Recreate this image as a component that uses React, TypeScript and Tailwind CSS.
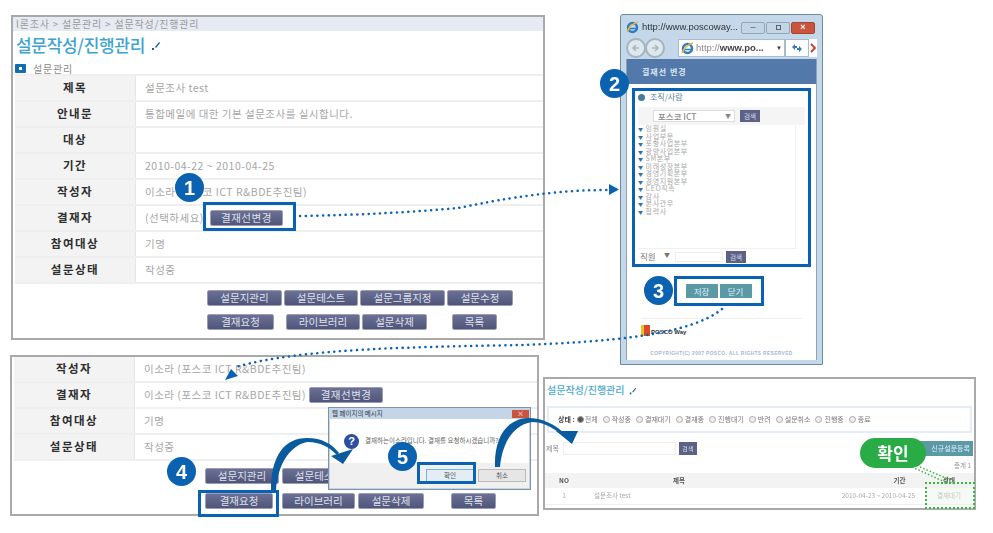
const kr = "font-['Noto_Sans_CJK_KR','Noto_Sans',sans-serif]";

function Btn({ w, children }: { w: string; children: string }) {
  return (
    <div className={`${w} h-[16px] flex items-center justify-center rounded-[2px] text-[10.5px] leading-none text-[#dfe0ea] border border-[#9a9eb5] bg-linear-to-b from-[#6b7094] to-[#50557a]`}>
      {children}
    </div>
  );
}

function Row({ label, h = "h-[26px]", children }: { label: string; h?: string; children?: React.ReactNode }) {
  return (
    <div className={`flex ${h} border-b-2 border-[#efefef]`}>
      <div className="w-[121px] shrink-0 flex items-center justify-center bg-[#f3f3f3] border-r border-[#e6e6e6] text-[11.5px] font-bold tracking-[1.5px] text-[#2e2e2e]">{label}</div>
      <div className="flex-1 flex items-center pl-[9px] text-[10.5px] tracking-[0.5px] text-[#a6a6a6] whitespace-nowrap">{children}</div>
    </div>
  );
}

function Num({ n, className }: { n: number; className: string }) {
  return (
    <div className={`absolute w-[29px] h-[29px] rounded-full bg-[#0b62b0] flex items-center justify-center text-white text-[20px] font-bold font-['Liberation_Sans',sans-serif] ${className}`}>{n}</div>
  );
}

function BlueBox({ className }: { className: string }) {
  return <div className={`absolute border-[3px] border-[#0a62b4] ${className}`} />;
}

function Panel1() {
  return (
    <div className="absolute left-[11px] top-[15px] w-[534px] h-[325px] border-2 border-[#a9a9a9] bg-white">
      <div className="h-[14px] bg-[#e6ebf3] flex items-center pb-[2px] text-[10px] tracking-[0.8px] text-[#9a9a9a] pl-[3px] whitespace-nowrap">l론조사 &gt; 설문관리 &gt; 설문작성/진행관리</div>
      <div className="h-[26px] flex items-center gap-[6px] pl-[3px]">
        <span className="text-[17px] font-medium text-[#3da4cf] leading-none tracking-[-0.3px]">설문작성/진행관리</span>
        <svg width="10" height="10" viewBox="0 0 10 10" className="mt-[4px]"><path d="M1 9 L3 9 L3 7 L1 7Z M4 6 L8 1 L9 2 L5 7Z" fill="#1f5f8f" /></svg>
      </div>
      <div className="h-[17px] flex items-center gap-[7px] pl-[2px] pt-[5px]">
        <div className="w-[11px] h-[9px] bg-[#0f6fb0] flex items-center justify-center rounded-[1px]"><div className="w-[3px] h-[3px] bg-white" /></div>
        <span className="text-[10px] tracking-[0.8px] text-[#8a8a8a]">설문관리</span>
      </div>
      <div className="ml-[2px] border-t-2 border-[#efefef]">
        <Row label="제목">설문조사 test</Row>
        <Row label="안내문">통합메일에 대한 기본 설문조사를 실시합니다.</Row>
        <Row label="대상" />
        <Row label="기간">2010-04-22 ~ 2010-04-25</Row>
        <Row label="작성자">이소라 (포스코 ICT R&amp;BDE추진팀)</Row>
        <Row label="결재자"><span>(선택하세요)</span><span className="ml-[6px]"><Btn w="w-[73px]">결재선변경</Btn></span></Row>
        <Row label="참여대상">기명</Row>
        <Row label="설문상태">작성중</Row>
      </div>
      <div className="mt-[6px] ml-[194px] flex flex-col gap-[8px]">
        <div className="flex gap-[2px]">
          <Btn w="w-[75px]">설문지관리</Btn><Btn w="w-[74px]">설문테스트</Btn><Btn w="w-[85px]">설문그룹지정</Btn><Btn w="w-[66px]">설문수정</Btn>
        </div>
        <div className="flex gap-[2px]">
          <Btn w="w-[67px]">결재요청</Btn><span className="w-[8px]" /><Btn w="w-[74px]">라이브러리</Btn><Btn w="w-[65px]">설문삭제</Btn><span className="w-[21px]" /><Btn w="w-[45px]">목록</Btn>
        </div>
      </div>
    </div>
  );
}

function IeIcon() {
  return (
    <svg width="13" height="13" viewBox="0 0 13 13" className="shrink-0">
      <circle cx="6.500" cy="6.500" r="4.500" fill="none" stroke="#2f7cc4" strokeWidth="2.500" />
      <path d="M2 7.500 H11" stroke="#2f7cc4" strokeWidth="1.500" />
      <path d="M1 11 C 2 7, 7 2, 12 1" stroke="#e8b93c" strokeWidth="1.500" fill="none" />
    </svg>
  );
}

function NavCircle({ d }: { d: string }) {
  return (
    <span className="w-[20px] h-[20px] -mr-[1px] rounded-full bg-[#dfe8ef] border-2 border-[#a5b3bf] flex items-center justify-center">
      <svg width="10" height="10" viewBox="0 0 10 10"><path d={d} stroke="#aab6c0" strokeWidth="1.500" fill="none" /></svg>
    </span>
  );
}

function Popup() {
  const items = ["임원실", "사업부문", "포항사업본부", "광양사업본부", "SM본부", "미래성장본부", "경영기획본부", "경영지원본부", "CEO직속", "감사", "본사관무", "협력사"];
  return (
    <div className="absolute left-[620px] top-[14px] w-[203px] h-[351px] border border-[#6f8ba3] rounded-t-[3px] bg-[#c5d8ea] flex flex-col px-[5px] pb-[4px]">
      <div className="h-[22px] flex items-center gap-[3px] font-['Liberation_Sans',sans-serif] shrink-0 pt-[3px]">
        <IeIcon />
        <span className="w-[96px] text-[9.5px] font-medium text-[#333] whitespace-nowrap">http://www.poscoway...</span>
        <div className="flex gap-[1px]">
          <span className="w-[24px] h-[12px] rounded-[2px] bg-[#c4d6e6] border border-[#8ea6bb] text-[9px] leading-[9px] text-center text-[#455]">–</span>
          <span className="w-[24px] h-[12px] rounded-[2px] bg-[#c4d6e6] border border-[#8ea6bb] flex items-center justify-center"><span className="w-[5px] h-[5px] border border-[#566]" /></span>
          <span className="w-[24px] h-[12px] rounded-[2px] bg-[#c9553f] border border-[#a5442f] text-[9px] leading-[9px] text-center font-bold text-white">×</span>
        </div>
      </div>
      <div className="h-[22px] flex items-center shrink-0 font-['Liberation_Sans',sans-serif]">
        <NavCircle d="M8 5 H2 M5 2 L2 5 L5 8" />
        <NavCircle d="M2 5 H8 M5 2 L8 5 L5 8" />
        <div className="ml-[14px] w-[107px] h-[18px] bg-white border border-[#a9bccb] flex items-center gap-[2px] px-[2px]">
          <IeIcon />
          <span className="text-[9.5px] text-[#888] whitespace-nowrap">http://<b className="text-[#444]">www.po...</b></span>
          <span className="ml-auto text-[6px] text-[#333]">▼</span>
        </div>
        <div className="flex-1 h-[18px] bg-white border border-[#a9bccb] flex items-center justify-center">
          <svg width="12" height="10" viewBox="0 0 12 10"><path d="M1 4 L4 1 L4 3 H6 V5 H4 V7Z M11 6 L8 3 V5 H6 V7 H8 V9Z" fill="#3a78b8" /></svg>
        </div>
        <svg width="8" height="18" viewBox="0 0 8 18" className="shrink-0 bg-white"><path d="M2 5 L6 9 L2 13" stroke="#c9453a" strokeWidth="2" fill="none" /></svg>
      </div>
      <div className="flex-1 bg-white flex flex-col border-x border-[#8ea2b5] min-h-0">
        <div className="h-[25px] bg-[#5379ab] flex items-center pl-[15px] text-[8px] font-bold tracking-[1px] text-[#dbe5f1] shrink-0">결재선 변경</div>
        <div className="h-[179px] mt-[4px] mx-[5px] border-[3px] border-[#0a62b4] flex flex-col px-[3px] pt-[0px] shrink-0">
          <div className="flex items-center gap-[5px] text-[8px] text-[#5a7b9c] h-[12px]"><span className="w-[7px] h-[7px] rounded-full bg-[#4a7a9a]" />조직/사람</div>
          <div className="mt-[4px] h-[18px] bg-[#f5f5f5] flex items-center pl-[15px] gap-[5px] shrink-0">
            <div className="w-[82px] h-[12px] bg-white border border-[#ddd] text-[8.5px] leading-[10px] pl-[4px] text-[#888] flex justify-between pr-[3px] font-medium"><span>포스코 ICT</span><span className="text-[6px]">▼</span></div>
            <div className="w-[20px] h-[12px] bg-[#5c6287] text-[6.5px] leading-[12px] text-center text-[#dde]">검색</div>
          </div>
          <div className="flex-1 border-r border-b border-[#f0f0f0] mr-[9px] flex flex-col text-[7px] text-[#a8a8a8] tracking-[0.6px] min-h-0">
            {items.map((t) => (
              <div key={t} className="flex items-center gap-[2px] h-[7.5px] leading-[7.5px]"><span className="text-[5px] text-[#3570a8]">▼</span>{t}</div>
            ))}
          </div>
          <div className="h-[15px] flex items-center gap-[3px] text-[8.5px] text-[#777] pl-[2px]">
            <span className="w-[32px] flex justify-between pr-[2px]">직원<span className="text-[6px]">▼</span></span>
            <span className="w-[48px] h-[10px] border border-[#eee]" />
            <span className="w-[20px] h-[12px] bg-[#5c6287] text-[6.5px] leading-[12px] text-center text-[#dde]">검색</span>
          </div>
        </div>
        <div className="mt-[9px] self-center ml-[-6px] w-[90px] h-[30px] border-[3px] border-[#0a62b4] flex items-center justify-center gap-[2px] shrink-0">
          <span className="w-[32px] h-[14px] bg-[#5b9aa5] text-[8.5px] leading-[14px] text-center text-[#def]">저장</span>
          <span className="w-[32px] h-[14px] bg-[#5b9aa5] text-[8.5px] leading-[14px] text-center text-[#def]">닫기</span>
        </div>
        <div className="mt-[12px] mx-[14px] border-t border-[#eee] h-[24px] flex items-center gap-[1px] shrink-0">
          <span className="w-[9px] h-[11px] bg-[#d84a2a] border-l-[3px] border-[#e8c020]" />
          <span className="text-[6px] font-bold text-[#333] font-['Liberation_Sans',sans-serif] mt-[4px]">POSCO Way</span>
        </div>
        <div className="mt-[8px] text-center text-[4.8px] font-bold tracking-[0.4px] text-[#a9b5cf] font-['Liberation_Sans',sans-serif] whitespace-nowrap">COPYRIGHT(C) 2007 POSCO. ALL RIGHTS RESERVED</div>
      </div>
    </div>
  );
}

function Panel2() {
  return (
    <div className="absolute left-[10px] top-[355px] w-[529px] h-[161px] border-2 border-[#a9a9a9] bg-white">
      <div className="ml-[2px]">
        <Row label="작성자">이소라 (포스코 ICT R&amp;BDE추진팀)</Row>
        <Row label="결재자"><span>이소라 (포스코 ICT R&amp;BDE추진팀)</span><span className="ml-[3px]"><Btn w="w-[74px]">결재선변경</Btn></span></Row>
        <Row label="참여대상">기명</Row>
        <Row label="설문상태">작성중</Row>
      </div>
      <div className="mt-[7px] ml-[193px] flex flex-col gap-[9px]">
        <div className="flex gap-[3px]"><Btn w="w-[74px]">설문지관리</Btn><Btn w="w-[74px]">설문테스트</Btn></div>
        <div className="flex gap-[3px]">
          <Btn w="w-[68px]">결재요청</Btn><span className="w-[3px]" /><Btn w="w-[73px]">라이브러리</Btn><Btn w="w-[66px]">설문삭제</Btn><span className="w-[21px]" /><Btn w="w-[45px]">목록</Btn>
        </div>
      </div>
    </div>
  );
}

function Dialog() {
  return (
    <div className="absolute left-[328px] top-[407px] w-[203px] h-[83px] border border-[#7f93a8] bg-[#c3d6e8] flex flex-col p-[1px]">
      <div className="h-[10px] flex items-center justify-between text-[6.5px] text-[#334] pl-[2px]">
        <span>웹 페이지의 메시지</span>
        <span className="w-[17px] h-[8px] bg-[#c9553f] text-white text-[7px] leading-[7px] text-center">×</span>
      </div>
      <div className="h-[44px] bg-white flex items-center gap-[6px] pl-[14px]">
        <span className="w-[15px] h-[15px] rounded-full bg-[#2d4f9e] text-white text-[11px] leading-[15px] text-center font-bold font-['Liberation_Sans',sans-serif]">?</span>
        <span className="text-[6.5px] text-[#666] whitespace-nowrap">결재하는이소라입니다. 결재를 요청하시겠습니까?</span>
      </div>
      <div className="flex-1 bg-[#f0f0f0] flex items-center justify-end pr-[3px] gap-[4px]">
        <span className="w-[48px] h-[13px] bg-[#e4edf3] border border-[#6fb6d8] text-[6.5px] leading-[11px] text-center text-[#555]">확인</span>
        <span className="w-[48px] h-[13px] bg-[#e6e6e6] border border-[#bbb] text-[6.5px] leading-[11px] text-center text-[#555]">취소</span>
      </div>
    </div>
  );
}

function Panel3() {
  const st = ["작성중", "결재대기", "결재중", "진행대기", "반려", "설문취소", "진행중", "종료"];
  return (
    <div className="absolute left-[543px] top-[377px] w-[433px] h-[133px] border-2 border-[#a9a9a9] bg-white">
      <div className="h-[20px] mt-[1px] flex items-center gap-[4px] pl-[2px]">
        <span className="text-[10px] font-medium text-[#4aa8d0] leading-none">설문작성/진행관리</span>
        <svg width="8" height="8" viewBox="0 0 10 10" className="mt-[2px]"><path d="M1 9 L3 9 L3 7 L1 7Z M4 6 L8 1 L9 2 L5 7Z" fill="#1f5f8f" /></svg>
      </div>
      <div className="mt-[6px] mx-[2px] h-[27px] border-2 border-[#e3ecf7] flex items-center pl-[9px] text-[7px] text-[#777] whitespace-nowrap">
        <b className="text-[#444] mr-[2px]">상태 :</b>
        <span className="flex items-center gap-[1px] mr-[5px]"><span className="w-[7px] h-[7px] rounded-full border border-[#999] bg-[#555]" />전체</span>
        {st.map((s) => (
          <span key={s} className="flex items-center gap-[2px] mr-[5px]"><span className="w-[7px] h-[7px] rounded-full border border-[#aaa] bg-[#eee]" />{s}</span>
        ))}
      </div>
      <div className="mt-[7px] flex items-center pl-[1px] pr-[1px] h-[16px] text-[7px] text-[#888]">
        <span>제목</span>
        <span className="ml-[4px] w-[113px] h-[13px] border border-[#eee]" />
        <span className="ml-[3px] w-[18px] h-[13px] bg-[#5c6287] text-[6px] leading-[13px] text-center text-[#dde]">검색</span>
        <span className="ml-auto w-[60px] h-[15px] bg-[#5b9aa5] text-[7px] leading-[15px] text-right pr-[3px] text-[#def]">신규설문등록</span>
      </div>
      <div className="mt-[3px] h-[12px] text-right pr-[3px] text-[6.5px] leading-[12px] text-[#999]">총계 1</div>
      <div className="mt-[2px] h-[15px] bg-[#f3f3f3] grid grid-cols-[38px_192px_1fr_50px] items-center text-[6.5px] font-bold text-[#555] text-center">
        <span>NO</span><span>제목</span><span className="pl-[100px]">기간</span><span>상태</span>
      </div>
      <div className="h-[17px] grid grid-cols-[38px_192px_1fr_50px] items-center text-[6.5px] text-[#aaa] border-b border-[#f0f0f0]">
        <span className="text-center">1</span><span className="pl-[11px]">설문조사 test</span><span className="text-right pr-[9px]">2010-04-23 ~ 2010-04-25</span><span className="text-center">결재대기</span>
      </div>
    </div>
  );
}

export default function App() {
  return (
    <div className={`relative w-[993px] h-[533px] overflow-hidden bg-white ${kr}`}>
      <div className="absolute inset-0 blur-[0.6px]">
        <Panel1 />
        <Popup />
        <Panel2 />
        <Dialog />
        <Panel3 />
      </div>
      <svg className="absolute inset-0 blur-[0.3px]" width="993" height="533" viewBox="0 0 993 533" fill="none">
        <path d="M300 216 C 360 215, 415 212, 458 208 C 480 204, 540 190, 607 190" stroke="#0a62b4" strokeWidth="2.500" strokeDasharray="0.1 5.600" strokeLinecap="round" />
        <path d="M609 184 L619 189.500 L609 195Z" fill="#0a62b4" />
        <path d="M722 309 C 690 335, 610 342, 520 345 C 420 347, 300 348, 236 367" stroke="#0a62b4" strokeWidth="2.500" strokeDasharray="0.1 5.600" strokeLinecap="round" />
        <path d="M225 380 L231 369 L238 376Z" fill="#0a62b4" />
        <path d="M271 490 C 271 455, 285 438, 307 438 C 322 438, 332 444, 339 453 L 337 455 C 329 447, 320 442, 308 442 C 292 444, 278 462, 276 490 Z" fill="#0a5a9e" />
        <path d="M343 464 L331 456 L353 449 Z" fill="#0a5a9e" />
        <path d="M495 467 C 494 440, 505 419, 528 418 C 542 418, 554 424, 564 433 L 562 435 C 551 426, 542 422, 532 422 C 512 425, 502 445, 500 467 Z" fill="#0a5a9e" />
        <path d="M572 444 L556 431 L578 431 Z" fill="#0a5a9e" />
        <path d="M920 467 L955 482" stroke="#3fb34a" strokeWidth="1.500" strokeDasharray="1.500 2" />
        <path d="M912 467 L945 482" stroke="#3fb34a" strokeWidth="1.500" strokeDasharray="1.500 2" />
      </svg>
      <BlueBox className="left-[203px] top-[202px] w-[93px] h-[29px]" />
      <BlueBox className="left-[198px] top-[490px] w-[81px] h-[27px]" />
      <BlueBox className="left-[417px] top-[462px] w-[59px] h-[22px]" />
      <Num n={1} className="left-[175px] top-[173px]" />
      <Num n={2} className="left-[600px] top-[69px]" />
      <Num n={3} className="left-[644px] top-[276px]" />
      <Num n={4} className="left-[167px] top-[457px]" />
      <Num n={5} className="left-[388px] top-[442px]" />
      <div className="absolute left-[860px] top-[438px] w-[66px] h-[30px] rounded-full bg-[#29ab45] flex items-center justify-center text-[17px] font-bold text-white">확인</div>
      <div className="absolute left-[925px] top-[482px] w-[50px] h-[27px] border-2 border-dotted border-[#3fb34a] bg-[#e6f4e4]/40" />
    </div>
  );
}
